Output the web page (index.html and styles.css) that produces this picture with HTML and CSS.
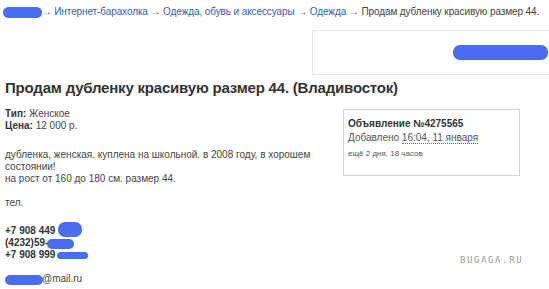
FILE: index.html
```html
<!DOCTYPE html>
<html lang="ru">
  <head>
    <meta charset="UTF-8" />
    <title>Продам дубленку красивую размер 44.</title>
    <link rel="stylesheet" href="styles.css">
  </head>
  <body>
    <div class="crumbs">
      <span class="blot blot_home"></span> &rarr;
      <a href="#">Интернет-барахолка</a> &rarr;
      <a href="#">Одежда, обувь и аксессуары</a> &rarr;
      <a href="#">Одежда</a> &rarr;
      <span class="current">Продам дубленку красивую размер 44.</span>
    </div>

    <div class="banner">
      <span class="blot blot_banner"></span>
    </div>

    <h1 class="title">Продам дубленку красивую размер 44. (Владивосток)</h1>

    <div class="main">
      <div class="details">
        <p class="props"><b>Тип:</b> Женское<br><b>Цена:</b> 12 000 р.</p>
        <p class="descr">дубленка, женская. куплена на школьной. в 2008 году, в хорошем состоянии!<br>на рост от 160 до 180 см. размер 44.</p>
        <p class="tel">тел.</p>
        <p class="phones">
          +7 908 449 <span class="blot blot_p1"></span><br>
          (4232)59-<span class="blot blot_p2"></span><br>
          +7 908 999 <span class="blot blot_p3"></span>
        </p>
        <p><span class="blot blot_mail"></span>@mail.ru</p>
      </div>

      <div class="info">
        <div class="info_num">Объявление №4275565</div>
        <div class="info_date">Добавлено <span class="dotted">16:04, 11 января</span></div>
        <div class="info_left">ещё 2 дня, 18 часов</div>
      </div>
    </div>

    <div class="mark">BUGAGA.RU</div>
  </body>
</html>
```

FILE: styles.css
```css
* {
  padding: 0;
  margin: 0;
  box-sizing: border-box;
}
body {
  width: 549px;
  height: 289px;
  overflow: hidden;
  background: #fff;
  color: #444;
  font-family: Arial, "Liberation Sans", sans-serif;
  font-size: 10px;
  position: relative;
}
a {
  color: #3461ad;
  text-decoration: none;
}

.blot {
  display: inline-block;
  background: #4a6cee;
  border-radius: 7px;
  vertical-align: middle;
}

.crumbs {
  padding: 6px 0 0 3px;
  height: 30px;
  color: #555;
  white-space: nowrap;
  letter-spacing: -0.1px;
}
.crumbs .current {
  color: #444;
}
.blot_home {
  width: 39px;
  height: 11px;
  margin-right: -3px;
}

.banner {
  margin-left: 312px;
  height: 45px;
  border: 1px solid #e6e6e6;
  border-right: none;
  display: flex;
  justify-content: flex-end;
  align-items: center;
  padding-right: 1px;
}
.blot_banner {
  width: 95px;
  height: 15px;
}

.title {
  margin: 4px 0 0 5px;
  font-size: 15px;
  letter-spacing: -0.2px;
  color: #333;
  line-height: 18px;
}

.main {
  display: flex;
  align-items: flex-start;
  padding-left: 5px;
}
.details {
  width: 338px;
  padding-right: 18px;
  padding-top: 11px;
  line-height: 12px;
}
.details b {
  color: #333;
}
.props {
  margin-bottom: 17px;
}
.descr {
  margin-bottom: 12px;
}
.tel {
  margin-bottom: 16px;
}
.phones {
  margin-bottom: 12px;
  font-weight: bold;
  color: #333;
}
.blot_p1 {
  width: 24px;
  height: 15px;
  margin-top: -3px;
}
.blot_p2 {
  width: 27px;
  height: 10px;
  margin-left: -1px;
}
.blot_p3 {
  width: 31px;
  height: 7px;
  margin-left: -1px;
}
.blot_mail {
  width: 38px;
  height: 10px;
  margin-right: -1px;
}

.info {
  margin-top: 12px;
  width: 177px;
  height: 67px;
  border: 1px solid #d4d4d4;
  padding: 7px 4px;
}
.info_num {
  font-weight: bold;
  color: #333;
  line-height: 14px;
}
.info_date {
  color: #555;
  line-height: 14px;
}
.dotted {
  border-bottom: 1px dotted #666;
}
.info_left {
  font-size: 8px;
  color: #555;
  margin-top: 4px;
}

.mark {
  position: absolute;
  left: 460px;
  top: 255px;
  font-family: "DejaVu Sans Mono", monospace;
  font-size: 9px;
  letter-spacing: 1.6px;
  color: #999;
}
```
